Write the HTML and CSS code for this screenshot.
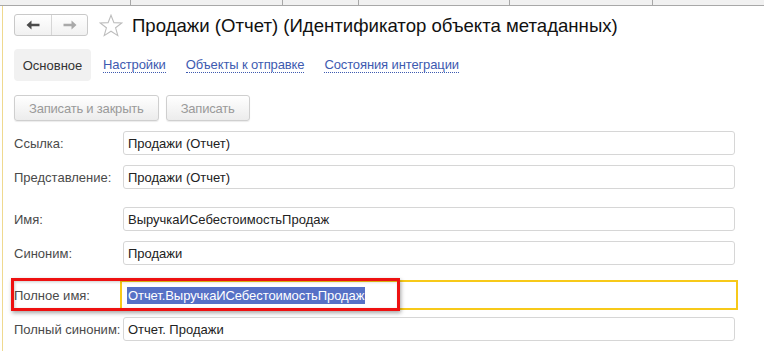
FILE: index.html
```html
<!DOCTYPE html>
<html lang="ru">
<head>
<meta charset="utf-8">
<title>Продажи (Отчет)</title>
<link rel="stylesheet" href="styles.css">
</head>
<body>
<div class="topbar">
  <div class="seg s1"></div>
  <div class="seg s2"></div>
  <div class="seg s3"></div>
  <div class="seg s4"></div>
  <div class="seg s5"></div>
  <div class="seg s6"></div>
</div>
<div class="window">
  <div class="header">
    <div class="navgroup">
      <div class="navbtn back">
        <svg width="14" height="10" viewBox="0 0 14 10"><path d="M0.5 5 L5.5 0.5 V3.8 H13.5 V6.2 H5.5 V9.5 Z" fill="#4a4a4a"/></svg>
      </div>
      <div class="navbtn fwd">
        <svg width="14" height="10" viewBox="0 0 14 10"><path d="M13.5 5 L8.5 0.5 V3.8 H0.5 V6.2 H8.5 V9.5 Z" fill="#a9a9a9"/></svg>
      </div>
    </div>
    <svg class="star" width="24" height="23" viewBox="0 0 24 23"><polygon points="12,1.2 14.9,8.6 22.8,8.9 16.6,13.8 18.8,21.6 12,17.2 5.2,21.6 7.4,13.8 1.2,8.9 9.1,8.6" fill="none" stroke="#bdbdbd" stroke-width="1.1" stroke-linejoin="miter"/></svg>
    <h1 class="title">Продажи (Отчет) (Идентификатор объекта метаданных)</h1>
  </div>

  <div class="tabs">
    <div class="tab active">Основное</div>
    <div class="tab"><span class="link">Настройки</span></div>
    <div class="tab"><span class="link">Объекты к отправке</span></div>
    <div class="tab"><span class="link">Состояния интеграции</span></div>
  </div>

  <div class="toolbar">
    <div class="btn">Записать и закрыть</div>
    <div class="btn">Записать</div>
  </div>

  <div class="form">
    <div class="group">
      <div class="row"><div class="label">Ссылка:</div><div class="input">Продажи (Отчет)</div></div>
      <div class="row"><div class="label">Представление:</div><div class="input">Продажи (Отчет)</div></div>
    </div>
    <div class="group">
      <div class="row"><div class="label">Имя:</div><div class="input">ВыручкаИСебестоимостьПродаж</div></div>
      <div class="row"><div class="label">Синоним:</div><div class="input">Продажи</div></div>
    </div>
    <div class="group">
      <div class="row focusrow">
        <div class="label">Полное имя:</div>
        <div class="input focused"><span class="sel">Отчет.ВыручкаИСебестоимостьПродаж</span></div>
        <div class="redbox"></div>
      </div>
      <div class="row"><div class="label">Полный синоним:</div><div class="input">Отчет. Продажи</div></div>
    </div>
  </div>
</div>
</body>
</html>
```

FILE: styles.css
```css
* { box-sizing: border-box; }
html, body { margin: 0; padding: 0; background: #fff; }
body {
  width: 764px;
  height: 351px;
  overflow: hidden;
  font-family: "Liberation Sans", Arial, sans-serif;
  font-size: 13px;
  color: #333;
}

.topbar {
  display: flex;
  height: 6px;
  background: #f1f1f1;
  border-bottom: 1px solid #a8a8a8;
}
.seg { height: 5px; border-right: 1px solid #a8a8a8; }
.s1 { width: 131px; }
.s2 { width: 152px; }
.s3 { width: 76px; }
.s4 { width: 151px; }
.s5 { width: 143px; }
.s6 { flex: 1; border-right: none; }

.window {
  margin-left: 2px;
  border-left: 1px solid #efd98f;
  height: 345px;
  padding: 8px 29px 0 11px;
}

.header {
  display: flex;
  align-items: center;
  height: 22px;
}
.navgroup {
  display: flex;
  width: 74px;
  height: 22px;
  border: 1px solid #c9c9c9;
  border-radius: 3px;
  background: linear-gradient(#ffffff, #f1f1f1);
}
.navbtn {
  display: flex;
  align-items: center;
  justify-content: center;
  height: 100%;
}
.back { width: 37px; border-right: 1px solid #d6d6d6; }
.fwd { flex: 1; }
.star { margin-left: 11px; margin-top: 1px; }
.title {
  margin: 2px 0 0 9px;
  font-size: 18.6px;
  font-weight: normal;
  color: #111;
  white-space: nowrap;
  line-height: 22px;
}

.tabs {
  display: flex;
  align-items: center;
  height: 32px;
  margin-top: 13px;
}
.tab {
  height: 32px;
  display: flex;
  align-items: center;
  padding: 0 10px;
  margin-right: 0;
  color: #333;
}
.tab.active {
  background: #f1f1f1;
  border-radius: 4px;
  width: 77px;
  justify-content: center;
  padding: 0;
  margin-right: 2px;
}
.link {
  color: #3d5ab0;
  border-bottom: 1px dotted #3d5ab0;
  line-height: 14px;
  letter-spacing: -0.12px;
}

.toolbar {
  display: flex;
  gap: 7px;
  margin-top: 14px;
}
.btn {
  height: 26px;
  padding: 0 14px;
  display: flex;
  align-items: center;
  border: 1px solid #cfcfcf;
  border-radius: 3px;
  background: linear-gradient(#ffffff, #ececec);
  color: #9a9a9a;
  letter-spacing: -0.2px;
  box-shadow: 0 1px 1px rgba(0,0,0,0.08);
}

.form {
  margin-top: 10px;
  display: flex;
  flex-direction: column;
  gap: 18px;
}
.group {
  display: flex;
  flex-direction: column;
  gap: 10px;
}
.row {
  display: flex;
  align-items: center;
  height: 24px;
  position: relative;
}
.label {
  width: 109px;
  flex: none;
  color: #4a4a4a;
}
.input {
  flex: 1;
  height: 24px;
  border: 1px solid #d6d6d6;
  border-radius: 3px;
  padding: 0 4px;
  display: flex;
  align-items: center;
  color: #222;
  white-space: nowrap;
}
.input.focused {
  border: 1px solid #ffffff;
  outline: 2px solid #f7c919;
  outline-offset: 1px;
  border-radius: 0;
  padding-left: 3px;
}
.sel {
  background: #5671c6;
  color: #fff;
  line-height: 17px;
  padding: 0 1px;
  letter-spacing: -0.08px;
}
.redbox {
  position: absolute;
  left: -3px;
  top: -5px;
  width: 389px;
  height: 33px;
  border: 3px solid #ee1111;
  box-shadow: 1px 2px 4px rgba(0,0,0,0.35), inset 1px 1px 3px rgba(0,0,0,0.2);
}
```
